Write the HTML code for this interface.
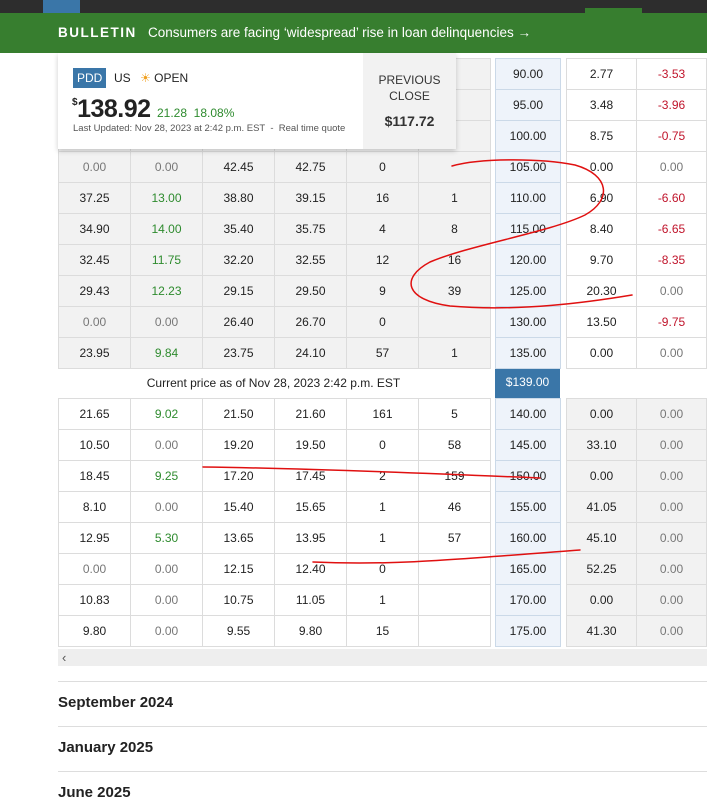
<!DOCTYPE html>
<html><head><style>
*{margin:0;padding:0;box-sizing:border-box}
body{width:707px;height:796px;overflow:hidden;background:#fff;font-family:"Liberation Sans",sans-serif;color:#222;position:relative}
.top{position:absolute;left:0;top:0;width:707px;height:13px;background:#2d2d2d}
.bul{position:absolute;left:0;top:13px;width:707px;height:40px;background:#377e2f;color:#fff;font-size:13.5px;line-height:40px;padding-left:58px}
table{position:absolute;border-collapse:collapse;font-size:12px;table-layout:fixed}
td{height:31px;border:1px solid #dcdcdc;text-align:center;padding:0}
.L td{width:72px}
.g{background:#f2f2f2}
.gr{color:#2e8b2e}.mu{color:#777}.rd{color:#c0142b}
.S td{width:65px;background:#eef3fa;border-color:#cbd9e8}
.R td{width:70px}
</style></head><body>
<div class="top"><div style="position:absolute;left:43px;top:0;width:37px;height:13px;background:#3a76a8"></div><div style="position:absolute;left:585px;top:8px;width:57px;height:5px;background:#377e2f"></div></div>
<div class="bul"><b style="letter-spacing:1.5px;font-size:13.5px">BULLETIN</b>&nbsp;&nbsp;&nbsp;Consumers are facing ‘widespread’ rise in loan delinquencies →</div>

<table class="L" style="left:58px;top:58px">
<tr class="g"><td></td><td></td><td></td><td></td><td></td><td></td></tr>
<tr class="g"><td></td><td></td><td></td><td></td><td></td><td></td></tr>
<tr class="g"><td></td><td></td><td></td><td></td><td></td><td></td></tr>
<tr class="g"><td class="mu">0.00</td><td class="mu">0.00</td><td>42.45</td><td>42.75</td><td>0</td><td></td></tr>
<tr class="g"><td>37.25</td><td class="gr">13.00</td><td>38.80</td><td>39.15</td><td>16</td><td>1</td></tr>
<tr class="g"><td>34.90</td><td class="gr">14.00</td><td>35.40</td><td>35.75</td><td>4</td><td>8</td></tr>
<tr class="g"><td>32.45</td><td class="gr">11.75</td><td>32.20</td><td>32.55</td><td>12</td><td>16</td></tr>
<tr class="g"><td>29.43</td><td class="gr">12.23</td><td>29.15</td><td>29.50</td><td>9</td><td>39</td></tr>
<tr class="g"><td class="mu">0.00</td><td class="mu">0.00</td><td>26.40</td><td>26.70</td><td>0</td><td></td></tr>
<tr class="g"><td>23.95</td><td class="gr">9.84</td><td>23.75</td><td>24.10</td><td>57</td><td>1</td></tr>
</table>
<div style="position:absolute;left:58px;top:368px;width:431px;height:30px;line-height:30px;text-align:center;font-size:12px">Current price as of Nov 28, 2023 2:42 p.m. EST</div>
<div style="position:absolute;left:495px;top:367px;width:65px;height:31px;line-height:31px;text-align:center;font-size:12px;background:#3a76a8;color:#fff">$139.00</div>
<table class="L" style="left:58px;top:398px">
<tr><td>21.65</td><td class="gr">9.02</td><td>21.50</td><td>21.60</td><td>161</td><td>5</td></tr>
<tr><td>10.50</td><td class="mu">0.00</td><td>19.20</td><td>19.50</td><td>0</td><td>58</td></tr>
<tr><td>18.45</td><td class="gr">9.25</td><td>17.20</td><td>17.45</td><td>2</td><td>159</td></tr>
<tr><td>8.10</td><td class="mu">0.00</td><td>15.40</td><td>15.65</td><td>1</td><td>46</td></tr>
<tr><td>12.95</td><td class="gr">5.30</td><td>13.65</td><td>13.95</td><td>1</td><td>57</td></tr>
<tr><td class="mu">0.00</td><td class="mu">0.00</td><td>12.15</td><td>12.40</td><td>0</td><td></td></tr>
<tr><td>10.83</td><td class="mu">0.00</td><td>10.75</td><td>11.05</td><td>1</td><td></td></tr>
<tr><td>9.80</td><td class="mu">0.00</td><td>9.55</td><td>9.80</td><td>15</td><td></td></tr>
</table>
<table class="S" style="left:495px;top:58px">
<tr><td>90.00</td></tr><tr><td>95.00</td></tr><tr><td>100.00</td></tr><tr><td>105.00</td></tr><tr><td>110.00</td></tr><tr><td>115.00</td></tr><tr><td>120.00</td></tr><tr><td>125.00</td></tr><tr><td>130.00</td></tr><tr><td>135.00</td></tr>
</table>
<table class="S" style="left:495px;top:398px">
<tr><td>140.00</td></tr><tr><td>145.00</td></tr><tr><td>150.00</td></tr><tr><td>155.00</td></tr><tr><td>160.00</td></tr><tr><td>165.00</td></tr><tr><td>170.00</td></tr><tr><td>175.00</td></tr>
</table>
<table class="R" style="left:566px;top:58px">
<tr><td>2.77</td><td class="rd">-3.53</td></tr>
<tr><td>3.48</td><td class="rd">-3.96</td></tr>
<tr><td>8.75</td><td class="rd">-0.75</td></tr>
<tr><td>0.00</td><td class="mu">0.00</td></tr>
<tr><td>6.90</td><td class="rd">-6.60</td></tr>
<tr><td>8.40</td><td class="rd">-6.65</td></tr>
<tr><td>9.70</td><td class="rd">-8.35</td></tr>
<tr><td>20.30</td><td class="mu">0.00</td></tr>
<tr><td>13.50</td><td class="rd">-9.75</td></tr>
<tr><td>0.00</td><td class="mu">0.00</td></tr>
</table>
<table class="R" style="left:566px;top:398px">
<tr class="g"><td>0.00</td><td class="mu">0.00</td></tr>
<tr class="g"><td>33.10</td><td class="mu">0.00</td></tr>
<tr class="g"><td>0.00</td><td class="mu">0.00</td></tr>
<tr class="g"><td>41.05</td><td class="mu">0.00</td></tr>
<tr class="g"><td>45.10</td><td class="mu">0.00</td></tr>
<tr class="g"><td>52.25</td><td class="mu">0.00</td></tr>
<tr class="g"><td>0.00</td><td class="mu">0.00</td></tr>
<tr class="g"><td>41.30</td><td class="mu">0.00</td></tr>
</table>

<div style="position:absolute;left:58px;top:53px;width:398px;height:96px;background:#fff;box-shadow:0 2px 5px rgba(0,0,0,.2)">
 <div style="position:absolute;left:305px;top:0;width:93px;height:96px;background:#f2f2f2;text-align:center;font-size:12px;color:#333;padding-top:19px;line-height:16px">PREVIOUS<br>CLOSE<div style="font-weight:bold;font-size:14px;margin-top:9px">$117.72</div></div>
 <div style="position:absolute;left:15px;top:15px;background:#3a76a8;color:#fff;font-size:12px;padding:0 4px;height:20px;line-height:20px">PDD</div>
 <div style="position:absolute;left:56px;top:15px;font-size:12px;line-height:20px">US <span style="color:#f0a020;margin-left:6px">☀</span> OPEN</div>
 <div style="position:absolute;left:14px;top:42px;font-size:25px;font-weight:bold;letter-spacing:-0.5px"><sup style="font-size:10px;vertical-align:12px">$</sup>138.92 <span style="font-size:12px;font-weight:normal;color:#2e8b2e;letter-spacing:0">21.28&nbsp;&nbsp;18.08%</span></div>
 <div style="position:absolute;left:15px;top:70px;font-size:9.5px;color:#555">Last Updated: Nov 28, 2023 at 2:42 p.m. EST &nbsp;- &nbsp;Real time quote</div>
</div>

<div style="position:absolute;left:58px;top:649px;width:649px;height:17px;background:#eee;font-size:13px;color:#555;padding-left:4px;line-height:17px">‹</div>
<div style="position:absolute;left:58px;top:681px;width:649px;border-top:1px solid #ddd"></div>
<div style="position:absolute;left:58px;top:694px;font-size:15px;font-weight:bold">September 2024</div>
<div style="position:absolute;left:58px;top:726px;width:649px;border-top:1px solid #ddd"></div>
<div style="position:absolute;left:58px;top:739px;font-size:15px;font-weight:bold">January 2025</div>
<div style="position:absolute;left:58px;top:771px;width:649px;border-top:1px solid #ddd"></div>
<div style="position:absolute;left:58px;top:784px;font-size:15px;font-weight:bold">June 2025</div>

<svg style="position:absolute;left:0;top:0" width="707" height="796"><g fill="none" stroke="#e01010" stroke-width="1.5" stroke-linecap="round">
<path d="M452 166 C480 158 540 158 575 165 C610 175 612 200 585 215 C550 232 470 245 430 262 C400 278 405 300 450 306 C520 312 590 302 632 295"/>
<path d="M203 467 C280 468 400 472 540 478"/>
<path d="M313 562 C400 566 470 558 580 550"/>
</g></svg>
</body></html>
